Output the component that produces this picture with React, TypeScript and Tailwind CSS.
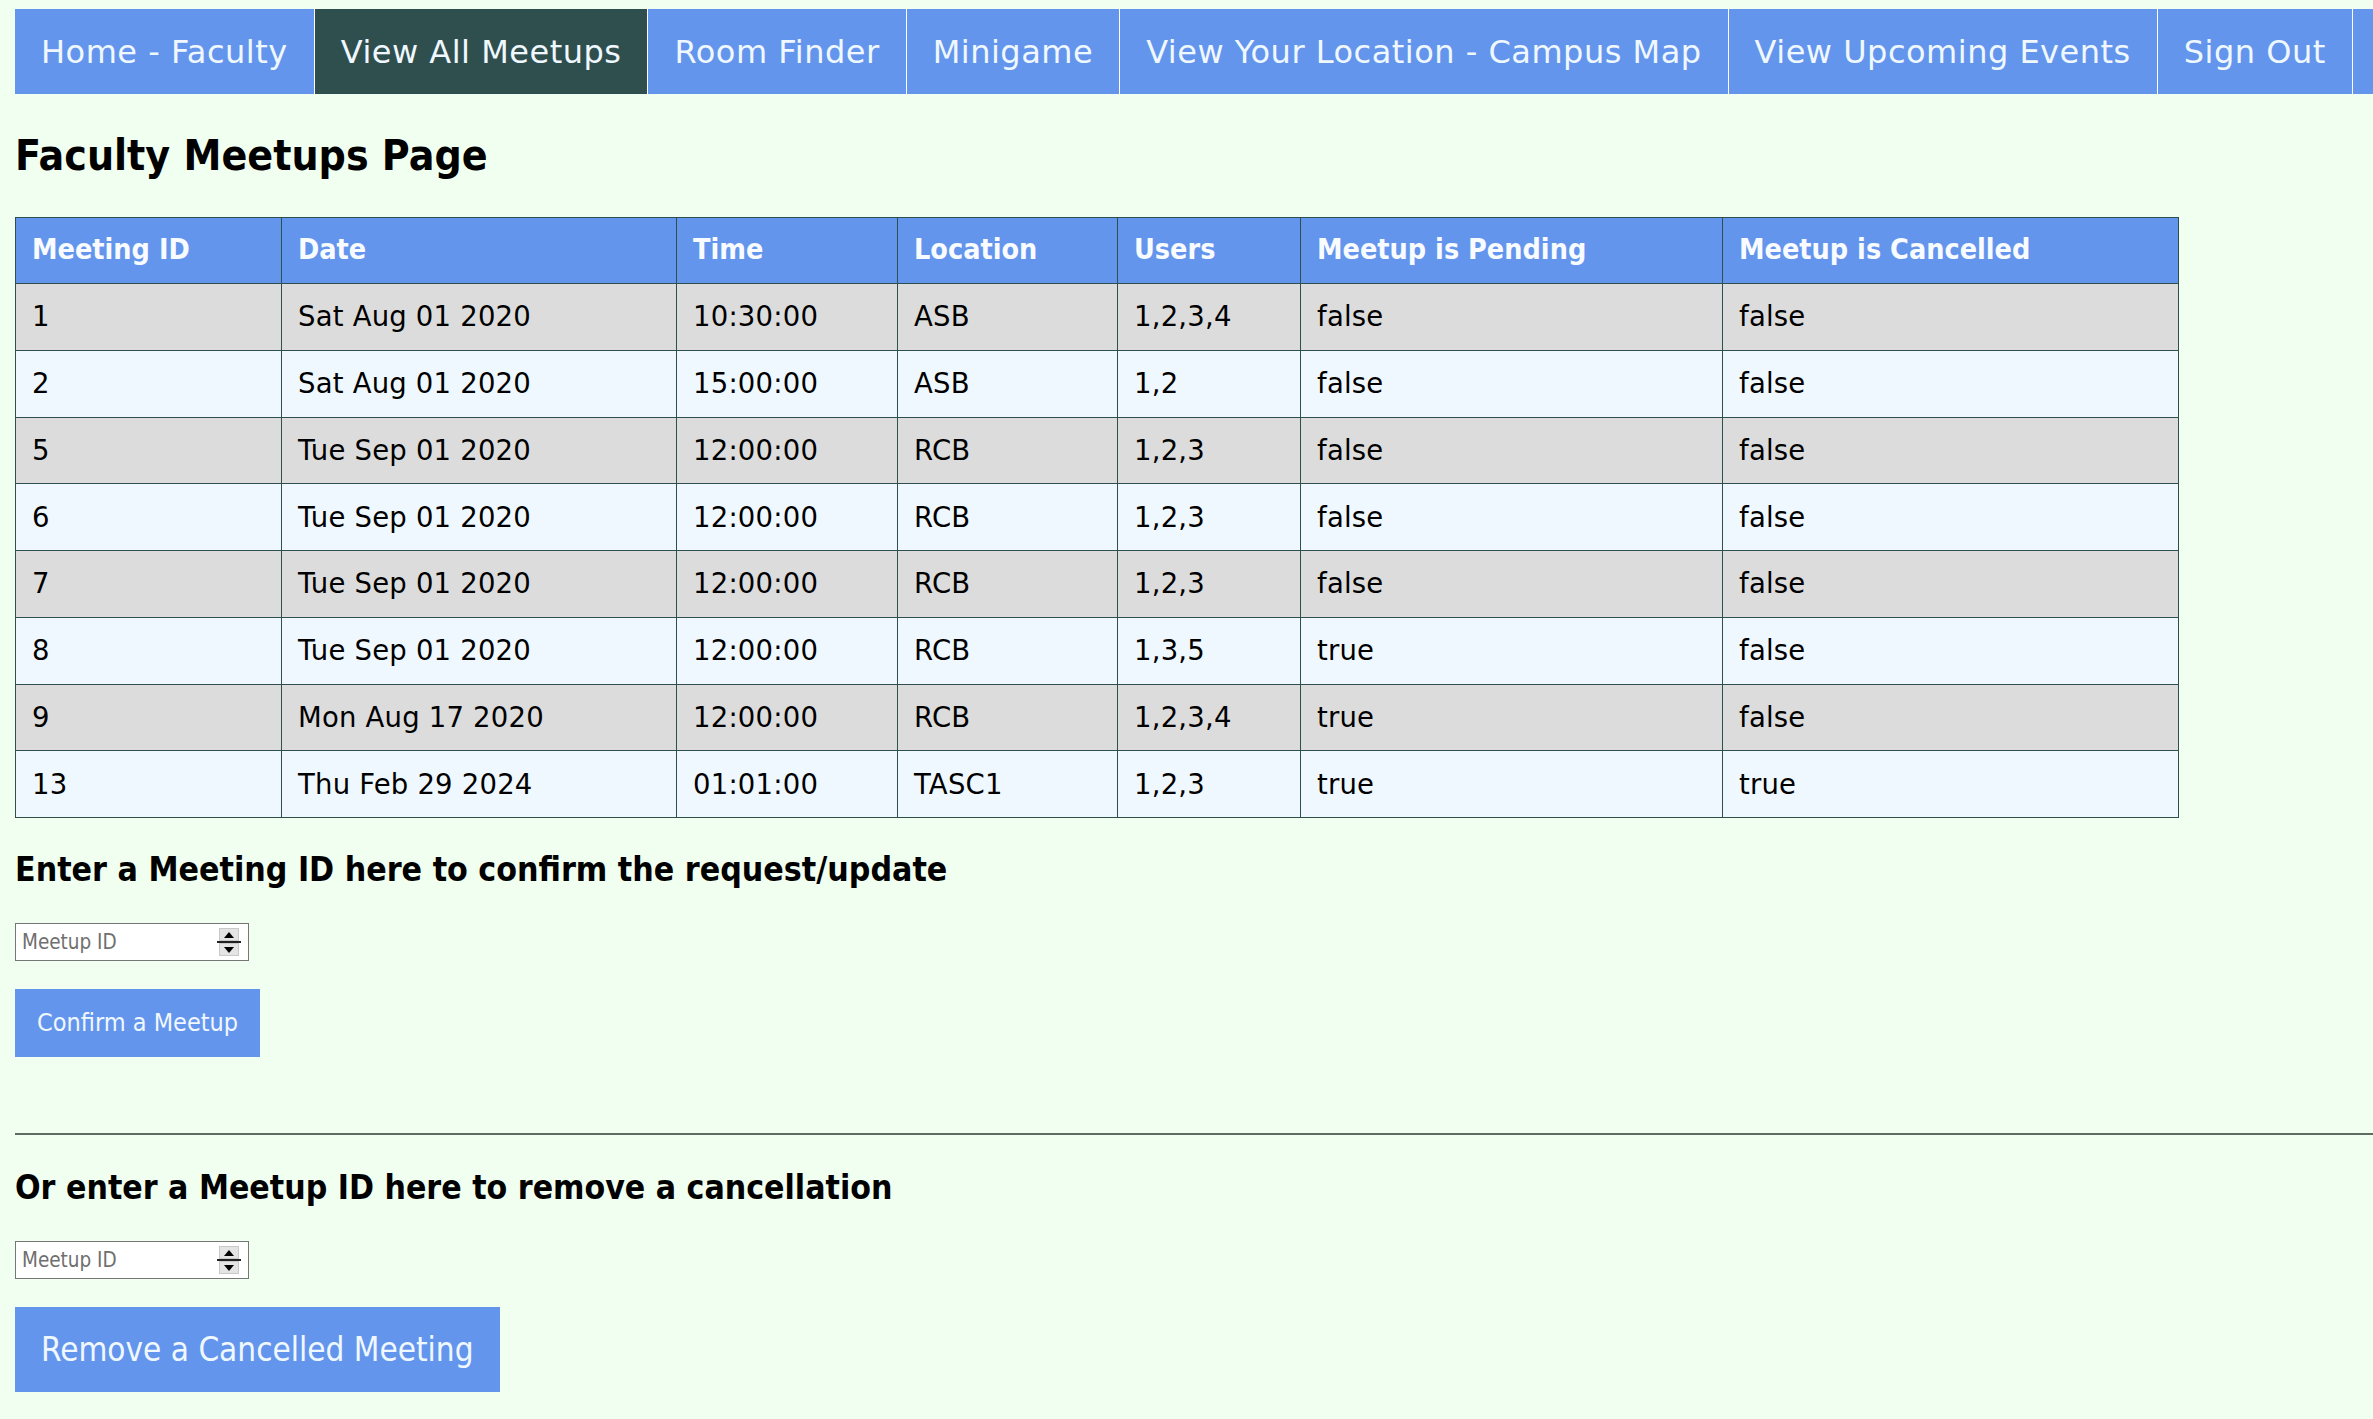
import React from 'react';

const regular = "font-['DejaVu_Sans',sans-serif]";
const condensed = "font-['DejaVu_Sans_Condensed','DejaVu_Sans',sans-serif] font-stretch-condensed";

const navItems = [
  { label: 'Home - Faculty', active: false },
  { label: 'View All Meetups', active: true },
  { label: 'Room Finder', active: false },
  { label: 'Minigame', active: false },
  { label: 'View Your Location - Campus Map', active: false },
  { label: 'View Upcoming Events', active: false },
  { label: 'Sign Out', active: false },
];

const columns = [
  { title: 'Meeting ID', width: 'w-[266px]' },
  { title: 'Date', width: 'w-[395px]' },
  { title: 'Time', width: 'w-[221px]' },
  { title: 'Location', width: 'w-[220px]' },
  { title: 'Users', width: 'w-[183px]' },
  { title: 'Meetup is Pending', width: 'w-[422px]' },
  { title: 'Meetup is Cancelled', width: 'w-[456px]' },
];

const rows = [
  ['1', 'Sat Aug 01 2020', '10:30:00', 'ASB', '1,2,3,4', 'false', 'false'],
  ['2', 'Sat Aug 01 2020', '15:00:00', 'ASB', '1,2', 'false', 'false'],
  ['5', 'Tue Sep 01 2020', '12:00:00', 'RCB', '1,2,3', 'false', 'false'],
  ['6', 'Tue Sep 01 2020', '12:00:00', 'RCB', '1,2,3', 'false', 'false'],
  ['7', 'Tue Sep 01 2020', '12:00:00', 'RCB', '1,2,3', 'false', 'false'],
  ['8', 'Tue Sep 01 2020', '12:00:00', 'RCB', '1,3,5', 'true', 'false'],
  ['9', 'Mon Aug 17 2020', '12:00:00', 'RCB', '1,2,3,4', 'true', 'false'],
  ['13', 'Thu Feb 29 2024', '01:01:00', 'TASC1', '1,2,3', 'true', 'true'],
];

function Spinner() {
  return (
    <div className="flex flex-col items-center w-[24px] h-[28px] mr-[7px]">
      <div className="flex-1 w-[20px] bg-[#e4e4e4] border border-[#c9c9c9] flex items-center justify-center">
        <svg width="10" height="6" viewBox="0 0 10 6">
          <path d="M5 0 L10 6 L0 6 Z" fill="#000" />
        </svg>
      </div>
      <div className="h-[2px] w-[24px] bg-[#222]" />
      <div className="flex-1 w-[20px] bg-[#e4e4e4] border border-[#c9c9c9] flex items-center justify-center">
        <svg width="10" height="6" viewBox="0 0 10 6">
          <path d="M0 0 L10 0 L5 6 Z" fill="#000" />
        </svg>
      </div>
    </div>
  );
}

function MeetupInput() {
  return (
    <div className="flex items-center w-[234px] h-[38px] bg-white border border-[#767676]">
      <input
        type="text"
        placeholder="Meetup ID"
        className={`${condensed} flex-1 min-w-0 h-full pl-[6px] text-[20.5px] text-black placeholder:text-[#6f6f6f] bg-transparent outline-none`}
      />
      <Spinner />
    </div>
  );
}

export default function App() {
  return (
    <div className="min-h-screen bg-[#f0fff0] pl-[15px] pt-[9px] overflow-hidden">
      <nav className={`${regular} flex h-[85px] bg-[#6495ed] overflow-hidden`}>
        {navItems.map(({ label, active }) => (
          <a
            key={label}
            href="#"
            className={`flex items-center shrink-0 px-[26px] text-[32px] tracking-[0.5px] text-[#f0f8ff] whitespace-nowrap border-r border-white ${
              active ? 'bg-[#2f4f4f]' : 'bg-[#6495ed]'
            }`}
          >
            {label}
          </a>
        ))}
      </nav>

      <h1 className={`${condensed} mt-[38px] text-[42.4px] leading-[48px] font-bold text-black`}>
        Faculty Meetups Page
      </h1>

      <table className="mt-[37px] w-[2164px] table-fixed border-collapse">
        <thead>
          <tr className="h-[66px] bg-[#6495ed]">
            {columns.map(({ title, width }) => (
              <th
                key={title}
                className={`${condensed} ${width} border border-[#2f4f4f] pl-[16px] text-left text-[28.5px] font-bold text-[#f8fbff]`}
              >
                {title}
              </th>
            ))}
          </tr>
        </thead>
        <tbody>
          {rows.map((row, i) => (
            <tr key={row[0]} className={`h-[66.75px] ${i % 2 === 0 ? 'bg-[#dcdcdc]' : 'bg-[#f0f8ff]'}`}>
              {row.map((cell, j) => (
                <td key={j} className={`${regular} border border-[#2f4f4f] pl-[16px] text-[27.5px] tracking-[0.2px] text-black`}>
                  {cell}
                </td>
              ))}
            </tr>
          ))}
        </tbody>
      </table>

      <h3 className={`${condensed} mt-[32px] text-[33.6px] leading-[40px] font-bold text-black`}>
        Enter a Meeting ID here to confirm the request/update
      </h3>
      <div className="mt-[33px]">
        <MeetupInput />
      </div>
      <button
        className={`${condensed} mt-[28px] h-[68px] px-[22px] bg-[#6495ed] text-[25px] text-[#f0f8ff]`}
      >
        Confirm a Meetup
      </button>

      <hr className="mt-[76px] border-0 border-t-2 border-[#5f6a60]" />

      <h3 className={`${condensed} mt-[33px] text-[33.5px] leading-[40px] font-bold text-black`}>
        Or enter a Meetup ID here to remove a cancellation
      </h3>
      <div className="mt-[33px]">
        <MeetupInput />
      </div>
      <button
        className={`${condensed} mt-[28px] h-[85px] px-[26px] bg-[#6495ed] text-[33px] text-[#f0f8ff]`}
      >
        Remove a Cancelled Meeting
      </button>
    </div>
  );
}
